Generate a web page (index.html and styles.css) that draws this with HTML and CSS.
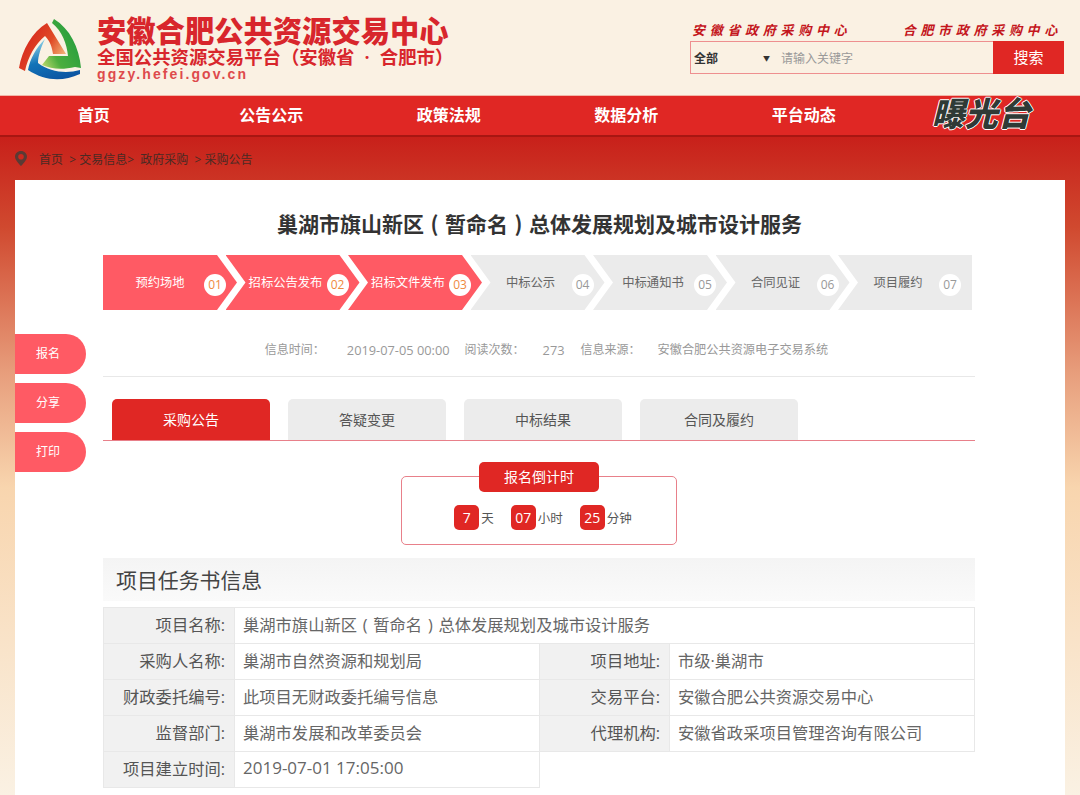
FILE: index.html
```html
<!DOCTYPE html>
<html lang="zh-CN">
<head>
  <meta charset="UTF-8">
  <meta name="viewport" content="width=device-width, initial-scale=1.0">
  <title>安徽合肥公共资源交易中心</title>
  <link rel="stylesheet" href="styles.css">
</head>
<body>
  <header class="site-header">
    <svg class="logo" width="80" height="80" viewBox="0 0 80 80">
      <defs>
        <linearGradient id="logo-red" x1="0.2" y1="0.4" x2="0.9" y2="0.8">
          <stop offset="0" stop-color="#d9301f"/>
          <stop offset="0.5" stop-color="#e04a26"/>
          <stop offset="1" stop-color="#f2b478"/>
        </linearGradient>
        <linearGradient id="logo-green" x1="1" y1="0.2" x2="0" y2="0.9">
          <stop offset="0" stop-color="#1e9a3e"/>
          <stop offset="0.7" stop-color="#4cae3e"/>
          <stop offset="1" stop-color="#b5d66a"/>
        </linearGradient>
        <linearGradient id="logo-blue" x1="0.9" y1="1" x2="0.5" y2="0">
          <stop offset="0" stop-color="#0a4f9e"/>
          <stop offset="0.6" stop-color="#1274b8"/>
          <stop offset="1" stop-color="#7cc4e0"/>
        </linearGradient>
      </defs>
      <path fill="url(#logo-red)" d="M9 58 C12 40 22 22 37 13 L56 44 L43 44 C42 37 40 31 35 26 C25 34 18 47 15 61 Z"/>
      <path fill="url(#logo-green)" d="M44 9 C60 19 69 37 71 58 L65 57 C52 60 41 59 32 55 L39 46 L58 46 C57 34 52 21 42 13 Z"/>
      <path fill="url(#logo-blue)" d="M70 60 L70 64 C52 72 35 71 18 60 C20 49 26 38 35 29 C31 37 28 46 28 53 C40 62 56 64 70 60 Z"/>
    </svg>
    <div class="brand">
      <div class="brand-name">安徽合肥公共资源交易中心</div>
      <div class="brand-sub">全国公共资源交易平台（安徽省 · 合肥市）</div>
      <div class="brand-url">ggzy.hefei.gov.cn</div>
    </div>
    <div class="header-right">
      <div class="center-links">
        <a>安徽省政府采购中心</a>
        <a>合肥市政府采购中心</a>
      </div>
      <div class="search">
        <span class="search-type">全部</span>
        <span class="search-arrow">▼</span>
        <span class="search-input">请输入关键字</span>
        <span class="search-btn">搜索</span>
      </div>
    </div>
  </header>

  <nav class="main-nav">
    <a>首页</a>
    <a>公告公示</a>
    <a>政策法规</a>
    <a>数据分析</a>
    <a>平台动态</a>
    <a class="nav-expose">曝光台</a>
  </nav>

  <div class="page-body">
    <div class="crumbs">
      <svg width="12" height="15" viewBox="0 0 12 15">
        <path fill="#5a3a34" fill-rule="evenodd" d="M6 0 C2.6 0 0 2.6 0 5.7 C0 9.5 6 15 6 15 C6 15 12 9.5 12 5.7 C12 2.6 9.4 0 6 0 Z M6 3 A2.8 2.8 0 1 1 6 8.6 A2.8 2.8 0 1 1 6 3 Z"/>
      </svg>
      <span>首页 &nbsp;&gt; 交易信息&gt; &nbsp;政府采购 &nbsp;&gt; 采购公告</span>
    </div>

    <div class="card">
      <aside class="side-btns">
        <a>报名</a>
        <a>分享</a>
        <a>打印</a>
      </aside>

      <main class="detail">
        <h1>巢湖市旗山新区<span class="paren">(</span>暂命名<span class="paren">)</span>总体发展规划及城市设计服务</h1>

        <div class="steps">
          <div class="step on"><span class="step-text">预约场地</span><span class="step-no">01</span></div>
          <div class="step on"><span class="step-text">招标公告发布</span><span class="step-no">02</span></div>
          <div class="step on"><span class="step-text">招标文件发布</span><span class="step-no">03</span></div>
          <div class="step"><span class="step-text">中标公示</span><span class="step-no">04</span></div>
          <div class="step"><span class="step-text">中标通知书</span><span class="step-no">05</span></div>
          <div class="step"><span class="step-text">合同见证</span><span class="step-no">06</span></div>
          <div class="step"><span class="step-text">项目履约</span><span class="step-no">07</span></div>
        </div>

        <div class="info">
          <span class="info-label">信息时间：</span><span class="info-val num">2019-07-05 00:00</span>
          <span class="info-label">阅读次数：</span><span class="info-val num reads">273</span>
          <span class="info-label">信息来源：</span><span class="info-val source">安徽合肥公共资源电子交易系统</span>
        </div>

        <div class="tabs">
          <a class="tab active">采购公告</a>
          <a class="tab">答疑变更</a>
          <a class="tab">中标结果</a>
          <a class="tab">合同及履约</a>
        </div>

        <div class="countdown">
          <div class="countdown-title">报名倒计时</div>
          <div class="countdown-row">
            <span class="count-item"><b>7</b>天</span>
            <span class="count-item"><b>07</b>小时</span>
            <span class="count-item"><b>25</b>分钟</span>
          </div>
        </div>

        <h2 class="section-title">项目任务书信息</h2>

        <table class="info-table">
          <colgroup>
            <col class="col-label"><col class="col-value"><col class="col-label2"><col>
          </colgroup>
          <tr>
            <th>项目名称:</th>
            <td colspan="3">巢湖市旗山新区<span class="paren">(</span>暂命名<span class="paren">)</span>总体发展规划及城市设计服务</td>
          </tr>
          <tr>
            <th>采购人名称:</th><td>巢湖市自然资源和规划局</td>
            <th>项目地址:</th><td>市级·巢湖市</td>
          </tr>
          <tr>
            <th>财政委托编号:</th><td>此项目无财政委托编号信息</td>
            <th>交易平台:</th><td>安徽合肥公共资源交易中心</td>
          </tr>
          <tr>
            <th>监督部门:</th><td>巢湖市发展和改革委员会</td>
            <th>代理机构:</th><td>安徽省政采项目管理咨询有限公司</td>
          </tr>
          <tr>
            <th>项目建立时间:</th><td class="num">2019-07-01 17:05:00</td>
            <td class="blank" colspan="2"></td>
          </tr>
        </table>
      </main>
    </div>
  </div>
</body>
</html>
```

FILE: styles.css
```css
* {
  box-sizing: border-box;
}
body {
  margin: 0;
  font-family: "Open Sans", "Noto Sans CJK SC", sans-serif;
  font-size: 14px;
  color: #555;
  background: #faf1e3;
}
a {
  text-decoration: none;
}
h1, h2 {
  margin: 0;
}
.paren {
  display: inline-block;
  width: 1em;
  text-align: center;
}

/* header */
.site-header {
  display: flex;
  height: 95px;
  padding: 10px 16px 0 10px;
  background: #faf1e3;
}
.brand {
  margin-left: 7px;
  width: 360px;
  color: #d8262c;
}
.brand-name {
  margin-top: 7px;
  font-family: "Liberation Serif", "Noto Sans CJK SC", sans-serif;
  font-size: 29.3px;
  font-weight: 900;
  line-height: 31px;
  white-space: nowrap;
}
.brand-sub {
  font-family: "Liberation Serif", "Noto Sans CJK SC", sans-serif;
  font-size: 18.4px;
  font-weight: 700;
  line-height: 20px;
  word-spacing: 5px;
  white-space: nowrap;
}
.brand-url {
  margin-top: -1px;
  font-family: "Liberation Sans", sans-serif;
  font-size: 14px;
  font-weight: 700;
  line-height: 14px;
  letter-spacing: 2.1px;
  color: #de4a4c;
}
.header-right {
  margin-left: auto;
  width: 374px;
}
.center-links {
  display: flex;
  justify-content: space-between;
  height: 31px;
  padding: 11px 2px 0;
  font-size: 13px;
  font-weight: 700;
  line-height: 18px;
  font-style: italic;
  letter-spacing: 4.7px;
  color: #c4161c;
}
.search {
  display: flex;
  align-items: center;
  height: 33px;
  border: 1px solid #ee8f8f;
  font-size: 12px;
}
.search-type {
  width: 72px;
  padding-left: 3px;
  font-weight: 700;
  color: #333;
}
.search-arrow {
  width: 18px;
  font-size: 7px;
  color: #333;
}
.search-input {
  flex: 1;
  color: #999;
}
.search-btn {
  width: 71px;
  height: 33px;
  margin-right: -1px;
  background: #e02724;
  color: #fff;
  font-size: 15px;
  line-height: 33px;
  text-align: center;
}

/* nav */
.main-nav {
  display: grid;
  grid-template-columns: repeat(6, 177.5px);
  height: 42px;
  padding-left: 5px;
  border-top: 1px solid #f2b6a8;
  border-bottom: 2px solid #a81612;
  background: #e02724;
}
.main-nav a {
  color: #fff;
  font-size: 16px;
  font-weight: 700;
  line-height: 39px;
  text-align: center;
}
.main-nav .nav-expose {
  margin-top: -2px;
  font-size: 33px;
  font-weight: 900;
  font-style: italic;
  line-height: 40px;
  color: #2f3a36;
  text-shadow: 1px 0 #fff, -1px 0 #fff, 0 1px #fff, 0 -1px #fff;
}

/* page body */
.page-body {
  padding: 0 15px;
  background: linear-gradient(#c8201a 0, #d0492f 90px, #e8a07e 240px, #f8d5ae 350px, #faf1e3 658px);
}
.crumbs {
  display: flex;
  align-items: center;
  gap: 12px;
  height: 43px;
  font-size: 12px;
  color: #4a2a24;
}
.card {
  display: flex;
  padding-bottom: 8px;
  background: #fff;
}
.side-btns {
  display: flex;
  flex-direction: column;
  gap: 9px;
  width: 71px;
  margin: 154px 17px 0 0;
}
.side-btns a {
  height: 40px;
  padding-left: 21px;
  border-radius: 0 20px 20px 0;
  background: #ff5a64;
  color: #fff;
  font-size: 12px;
  line-height: 40px;
}
.detail {
  width: 872px;
}
.detail h1 {
  padding: 29px 0 18px;
  margin-right: -1px;
  font-family: "Noto Sans CJK SC", sans-serif;
  font-size: 21px;
  font-weight: 700;
  line-height: 28px;
  color: #333;
  text-align: center;
}

/* steps */
.steps {
  display: flex;
  width: 870px;
  height: 55px;
}
.step {
  display: flex;
  flex: none;
  align-items: center;
  width: 134px;
  height: 55px;
  margin-right: -11.5px;
  padding-left: 20px;
  background: #ebebeb;
  color: #666;
  font-size: 12.3px;
  clip-path: polygon(0 0, 114px 0, 134px 50%, 114px 100%, 0 100%, 20px 50%);
}
.step.on {
  background: #ff5a64;
  color: #fff;
}
.step:first-child {
  padding-left: 14px;
  clip-path: polygon(0 0, 114px 0, 134px 50%, 114px 100%, 0 100%);
}
.step:last-child {
  clip-path: polygon(0 0, 100% 0, 100% 100%, 0 100%, 20px 50%);
}
.step-text {
  flex: 1;
  margin-top: -2px;
  text-align: center;
  white-space: nowrap;
}
.step-no {
  width: 22px;
  height: 22px;
  margin: 4px 11px 0 1px;
  border-radius: 50%;
  background: #fff;
  color: #999;
  font-size: 12px;
  line-height: 22px;
  text-align: center;
}
.step.on .step-no {
  color: #ef8a3e;
}

/* info line */
.info {
  display: flex;
  justify-content: center;
  height: 67px;
  padding: 29px 0 0 15px;
  border-bottom: 1px solid #e8e8e8;
  font-size: 12px;
  line-height: 22px;
  color: #999;
}
.info-label {
  margin-right: 22px;
}
.info-val {
  margin-right: 15px;
}
.info-val.num {
  font-size: 12.8px;
}
.info-val.reads {
  margin-left: -4px;
  margin-right: 16px;
}
.info-val.source {
  margin: 0 0 0 -5px;
  font-size: 12.2px;
}

/* tabs */
.tabs {
  display: flex;
  gap: 18px;
  margin-top: 22px;
  padding-left: 9px;
  border-bottom: 1px solid #e8808a;
}
.tab {
  width: 158px;
  height: 41px;
  border-radius: 5px 5px 0 0;
  background: #ececec;
  color: #555;
  font-size: 14px;
  line-height: 41px;
  text-align: center;
}
.tab.active {
  background: #e02724;
  color: #fff;
}

/* countdown */
.countdown {
  position: relative;
  width: 276px;
  height: 69px;
  margin: 35px auto 0;
  padding: 28px 0 0 8px;
  border: 1px solid #e8808a;
  border-radius: 5px;
}
.countdown-title {
  position: absolute;
  top: -15px;
  left: 77px;
  width: 120px;
  height: 30px;
  border-radius: 5px;
  background: #e02724;
  color: #fff;
  font-size: 14px;
  line-height: 30px;
  text-align: center;
}
.countdown-row {
  display: flex;
  justify-content: center;
  gap: 17px;
}
.count-item {
  display: flex;
  align-items: center;
  gap: 2px;
  font-size: 12.5px;
  color: #555;
}
.count-item b {
  width: 25px;
  height: 25px;
  border-radius: 5px;
  background: #e02724;
  color: #fff;
  font-size: 14px;
  font-weight: 400;
  line-height: 25px;
  text-align: center;
}

/* project table */
.section-title {
  height: 43px;
  margin-top: 13px;
  padding-left: 13px;
  background: linear-gradient(#f4f4f4, #fafafa);
  font-size: 20.9px;
  font-weight: 400;
  line-height: 45px;
  color: #444;
}
.info-table {
  width: 872px;
  margin-top: 6px;
  border-collapse: collapse;
  table-layout: fixed;
  font-size: 16.3px;
}
.col-label {
  width: 131px;
}
.col-value {
  width: 305px;
}
.col-label2 {
  width: 130px;
}
.info-table th, .info-table td {
  height: 36px;
  padding: 0 9px 4px 8px;
  border: 1px solid #e8e8e8;
  font-weight: 400;
  white-space: nowrap;
}
.info-table th {
  background: #f1f1f1;
  color: #555;
  text-align: right;
}
.info-table td {
  color: #666;
}
.info-table td.num {
  font-size: 17px;
}
.info-table td.blank {
  border: none;
  border-left: 1px solid #e8e8e8;
}
```
